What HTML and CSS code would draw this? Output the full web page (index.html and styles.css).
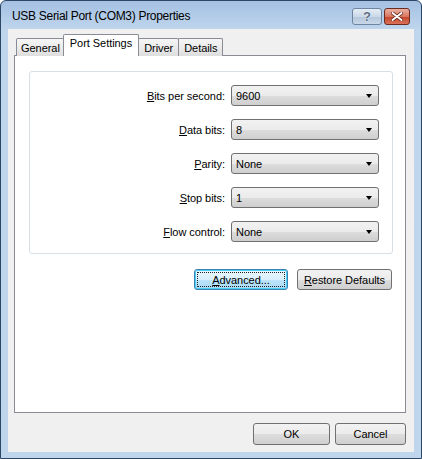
FILE: index.html
```html
<!DOCTYPE html>
<html lang="en">
<head>
    <meta charset="UTF-8">
    <title>USB Serial Port (COM3) Properties</title>
    <link rel="stylesheet" href="styles.css">
</head>
<body>
    <div class="window">
        <div class="titlebar">
            <span class="title">USB Serial Port (COM3) Properties</span>
            <div class="caption-buttons">
                <span class="cap-btn help">?</span>
                <span class="cap-btn close">
                    <svg width="12" height="9" viewBox="0 0 12 9">
                        <path d="M1.5 1 L10.5 8 M10.5 1 L1.5 8" stroke="#5a1c12" stroke-width="3.4" stroke-linecap="round"/>
                        <path d="M1.5 1 L10.5 8 M10.5 1 L1.5 8" stroke="#fff" stroke-width="2" stroke-linecap="round"/>
                    </svg>
                </span>
            </div>
        </div>

        <div class="client">
            <div class="tabs">
                <div class="tab first">General</div>
                <div class="tab selected">Port Settings</div>
                <div class="tab">Driver</div>
                <div class="tab">Details</div>
            </div>

            <div class="pane">
                <div class="group">
                    <div class="row">
                        <label><u>B</u>its per second:</label>
                        <div class="combo"><span>9600</span><i class="arrow"></i></div>
                    </div>
                    <div class="row">
                        <label><u>D</u>ata bits:</label>
                        <div class="combo"><span>8</span><i class="arrow"></i></div>
                    </div>
                    <div class="row">
                        <label><u>P</u>arity:</label>
                        <div class="combo"><span>None</span><i class="arrow"></i></div>
                    </div>
                    <div class="row">
                        <label><u>S</u>top bits:</label>
                        <div class="combo"><span>1</span><i class="arrow"></i></div>
                    </div>
                    <div class="row">
                        <label><u>F</u>low control:</label>
                        <div class="combo"><span>None</span><i class="arrow"></i></div>
                    </div>
                </div>

                <div class="pane-buttons">
                    <button class="btn default"><span class="focus"><u>A</u>dvanced...</span></button>
                    <button class="btn"><u>R</u>estore Defaults</button>
                </div>
            </div>

            <div class="dialog-buttons">
                <button class="btn ok">OK</button>
                <button class="btn cancel">Cancel</button>
            </div>
        </div>
    </div>
</body>
</html>
```

FILE: styles.css
```css
body {
    margin: 0;
    font-family: "Liberation Sans", Arial, sans-serif;
    font-size: 11px;
    letter-spacing: -0.05px;
    color: #000;
    background: #fff;
}
.window {
    width: 422px;
    height: 459px;
    box-sizing: border-box;
    border: 1px solid #2c4766;
    border-radius: 6px 6px 0 0;
    padding: 0 7px 6px 7px;
    background: linear-gradient(#a4c1e2, #c0d6ed 30px, #bfd5ec);
    display: flex;
    flex-direction: column;
}
.titlebar {
    height: 28px;
    display: flex;
    align-items: center;
    justify-content: space-between;
    padding: 0 4px 0 4px;
}
.title {
    font-size: 12px;
    letter-spacing: -0.3px;
    margin-top: 2px;
}
.caption-buttons {
    display: flex;
    gap: 2px;
    margin-top: 3px;
}
.cap-btn {
    height: 15px;
    display: flex;
    align-items: center;
    justify-content: center;
    border-radius: 3px;
}
.help {
    width: 28px;
    border: 1px solid #6f84a0;
    background: linear-gradient(#e4ecf5, #cbd9e8 50%, #b3c6dc 51%, #c9d8e8);
    color: #5a6c84;
    font-size: 13px;
    font-weight: bold;
    text-shadow: 0 0 1px #fff, 0 0 1px #fff;
}
.close {
    width: 24px;
    border: 1px solid #6d2a1e;
    background: linear-gradient(#eab1a3, #d8765f 50%, #c4432b 51%, #d9735a);
}
.client {
    flex: 1;
    background: #f0f0f0;
    padding: 6px 8px 0 6px;
    display: flex;
    flex-direction: column;
}
.tabs {
    display: flex;
    align-items: flex-end;
    height: 21px;
    padding-left: 2px;
    margin-bottom: -1px;
    position: relative;
    z-index: 1;
}
.tab {
    height: 17px;
    line-height: 18px;
    padding: 0 5px;
    border: 1px solid #898c95;
    border-bottom: none;
    border-radius: 2px 2px 0 0;
    background: linear-gradient(#f6f6f6, #ebebeb 50%, #dedede);
    margin-right: -1px;
}
.tab.first {
    padding: 0 4px;
}
.tab.selected {
    height: 21px;
    line-height: 17px;
    padding: 0 6px;
    margin: 0 -1px 0 -1px;
    background: #fff;
    position: relative;
    z-index: 2;
}
.pane {
    height: 358px;
    box-sizing: border-box;
    border: 1px solid #898c95;
    background: #fff;
    padding: 15px 12px 0 14px;
}
.group {
    border: 1px solid #d5dfe5;
    border-radius: 3px;
    padding: 13px 13px 11px 0;
    display: flex;
    flex-direction: column;
    gap: 13px;
}
.row {
    display: grid;
    grid-template-columns: 195px 148px;
    column-gap: 6px;
    align-items: center;
}
.row label {
    text-align: right;
}
.combo {
    height: 21px;
    box-sizing: border-box;
    border: 1px solid #707070;
    border-radius: 3px;
    background: linear-gradient(#f2f2f2, #ebebeb 50%, #dddddd 51%, #cfcfcf);
    display: flex;
    align-items: center;
    justify-content: space-between;
    padding: 1px 6px 0 4px;
}
.arrow {
    width: 0;
    height: 0;
    border-left: 3.5px solid transparent;
    border-right: 3.5px solid transparent;
    border-top: 4px solid #000;
}
.pane-buttons {
    display: flex;
    justify-content: flex-end;
    gap: 9px;
    margin-top: 15px;
    padding-right: 1px;
}
.btn {
    font: inherit;
    letter-spacing: inherit;
    color: #000;
    height: 21px;
    box-sizing: border-box;
    border: 1px solid #707070;
    border-radius: 3px;
    background: linear-gradient(#f2f2f2, #ebebeb 50%, #dddddd 51%, #cfcfcf);
    padding: 0;
    width: 95px;
}
.btn.default {
    width: 94px;
    border-color: #3c7fb1;
    background: linear-gradient(#eaf6fd, #d9f0fc 50%, #bee6fd 51%, #a7d9f5);
    box-shadow: inset 0 0 0 1px #48d0f7;
    padding: 2px;
}
.focus {
    display: flex;
    align-items: center;
    justify-content: center;
    height: 100%;
    box-sizing: border-box;
    border: 1px dotted #222;
}
.dialog-buttons {
    display: flex;
    justify-content: flex-end;
    gap: 5px;
    margin-top: 10px;
}
.btn.ok {
    width: 77px;
    height: 22px;
}
.btn.cancel {
    width: 71px;
    height: 22px;
}
```
